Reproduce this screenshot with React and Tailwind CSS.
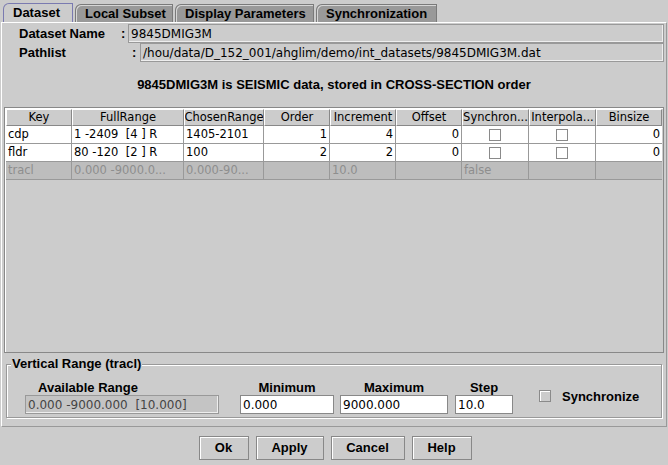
import React from "react";

const tabs = ["Dataset", "Local Subset", "Display Parameters", "Synchronization"];
const tabWidths = ["w-[70px]", "w-[98px]", "w-[139px]", "w-[121px]"];

// bold labels use an Arial-width face, plain values use DejaVu
const B = "font-['Liberation_Sans',sans-serif] font-bold text-[13px] whitespace-nowrap";

const columns = [
  { name: "Key", w: "w-[66px]" },
  { name: "FullRange", w: "w-[112px]" },
  { name: "ChosenRange", w: "w-[80px]" },
  { name: "Order", w: "w-[66px]" },
  { name: "Increment", w: "w-[66px]" },
  { name: "Offset", w: "w-[66px]" },
  { name: "Synchron...", w: "w-[67px]" },
  { name: "Interpola...", w: "w-[67px]" },
  { name: "Binsize", w: "w-[66px]" },
];

const rows = [
  { key: "cdp", full: "1 -2409  [4 ] R", chosen: "1405-2101", order: "1", inc: "4", off: "0", bin: "0" },
  { key: "fldr", full: "80 -120  [2 ] R", chosen: "100", order: "2", inc: "2", off: "0", bin: "0" },
];

function Check() {
  return <span className="block w-[12px] h-[12px] border border-[#8a8a8a] bg-white shadow-[inset_1px_1px_0_#fff]" />;
}

function Cell({ w, align = "left", children, last }) {
  return (
    <div
      className={`${w} h-full flex items-center px-[2px] border-b border-[#999999] whitespace-pre overflow-hidden ${last ? "" : "border-r"} ${
        align === "right" ? "justify-end" : align === "center" ? "justify-center" : "justify-start"
      }`}
    >
      {children}
    </div>
  );
}

function Button({ label, w }) {
  return (
    <div className={`${w} h-[24px] border border-[#888888] shadow-[inset_1px_1px_0_#ffffff] bg-[#cccccc] flex items-center justify-center ${B}`}>
      {label}
    </div>
  );
}

export default function App() {
  return (
    <div className="w-[668px] h-[465px] bg-[#cccccc] text-black overflow-hidden flex flex-col font-['DejaVu_Sans',sans-serif]">
      {/* tab strip */}
      <div className="h-[22px] flex items-end pl-[3px] gap-[2px]">
        {tabs.map((t, i) => (
          <div
            key={t}
            className={`${tabWidths[i]} flex items-center pl-[9px] rounded-tl-[6px] border border-b-0 ${B} ${
              i === 0
                ? "bg-[#cccccc] border-[#7a7ab0] h-[19px]"
                : "bg-[#999999] border-[#7a7a7a] h-[18px] shadow-[inset_1px_1px_0_#d6d6d6]"
            }`}
          >
            {t}
          </div>
        ))}
      </div>

      {/* tab content */}
      <div className="flex-1 mx-[1px] border-t border-white border-l border-l-white border-r border-r-[#999999] border-b border-b-[#999999] flex flex-col px-[2px]">
        <div className="flex items-center h-[19px] mt-[1px]">
          <span className={`w-[104px] pl-[15px] ${B}`}>Dataset Name</span>
          <span className={`w-[20px] pl-[13px] ${B}`}>:</span>
          <div className="flex-1 h-[19px] border border-[#999999] shadow-[inset_-1px_-1px_0_#eeeeee] flex items-center pl-[2px] text-[12px]">
            9845DMIG3M
          </div>
        </div>
        <div className="flex items-center h-[19px]">
          <span className={`w-[128px] pl-[15px] ${B}`}>Pathlist</span>
          <span className={`w-[8px] ${B}`}>:</span>
          <div className="flex-1 h-[19px] border border-[#999999] shadow-[inset_-1px_-1px_0_#eeeeee] flex items-center pl-[2px] text-[12px]">
            /hou/data/D_152_001/ahglim/demo/int_datasets/9845DMIG3M.dat
          </div>
        </div>
        <div className={`h-[45px] flex items-center justify-center ${B}`}>
          9845DMIG3M is SEISMIC data, stored in CROSS-SECTION order
        </div>

        {/* table */}
        <div className="h-[246px] border border-[#888888] shadow-[inset_1px_1px_0_#ffffff] p-[1px] text-[11.5px]">
          <div className="flex h-[17px]">
            {columns.map((c) => (
              <div
                key={c.name}
                className={`${c.w} h-full flex items-center justify-center border-l border-l-white border-t border-t-white border-r border-r-[#888888] border-b border-b-[#888888] overflow-hidden whitespace-nowrap`}
              >
                {c.name}
              </div>
            ))}
          </div>
          {rows.map((r) => (
            <div key={r.key} className="flex h-[18px] bg-white w-[656px]">
              <Cell w={columns[0].w}>{r.key}</Cell>
              <Cell w={columns[1].w}>{r.full}</Cell>
              <Cell w={columns[2].w}>{r.chosen}</Cell>
              <Cell w={columns[3].w} align="right">{r.order}</Cell>
              <Cell w={columns[4].w} align="right">{r.inc}</Cell>
              <Cell w={columns[5].w} align="right">{r.off}</Cell>
              <Cell w={columns[6].w} align="center"><Check /></Cell>
              <Cell w={columns[7].w} align="center"><Check /></Cell>
              <Cell w={columns[8].w} align="right" last>{r.bin}</Cell>
            </div>
          ))}
          <div className="flex h-[18px] bg-[#bdbdbd] text-[#8e8e8e] w-[656px]">
            <Cell w={columns[0].w}>tracl</Cell>
            <Cell w={columns[1].w}>0.000 -9000.0...</Cell>
            <Cell w={columns[2].w}>0.000-90...</Cell>
            <Cell w={columns[3].w} />
            <Cell w={columns[4].w}>10.0</Cell>
            <Cell w={columns[5].w} />
            <Cell w={columns[6].w}>false</Cell>
            <Cell w={columns[7].w} />
            <Cell w={columns[8].w} last />
          </div>
        </div>

        {/* vertical range */}
        <div className="relative mt-[11px] mx-[2px] h-[54px] border border-[#999999] shadow-[inset_1px_1px_0_#ffffff,1px_1px_0_#ffffff]">
          <span className={`absolute -top-[8px] left-[4px] bg-[#cccccc] px-[1px] leading-[14px] ${B}`}>
            Vertical Range (tracl)
          </span>
          <div className="flex items-end h-full pb-[3px] pl-[18px] text-[12px]">
            <div className="flex flex-col items-start w-[196px]">
              <span className={`pl-[13px] leading-[15px] ${B}`}>Available Range</span>
              <div className="w-[194px] h-[19px] border border-[#999999] shadow-[inset_-1px_-1px_0_#eeeeee] bg-[#c4c4c4] pl-[2px] flex items-center text-[#444] whitespace-pre">
                0.000 -9000.000  [10.000]
              </div>
            </div>
            <div className="flex flex-col items-center ml-[19px] w-[94px]">
              <span className={`leading-[15px] ${B}`}>Minimum</span>
              <div className="w-[94px] h-[19px] border border-[#888888] bg-white pl-[2px] flex items-center self-start">0.000</div>
            </div>
            <div className="flex flex-col items-center ml-[6px] w-[108px]">
              <span className={`leading-[15px] ${B}`}>Maximum</span>
              <div className="w-[108px] h-[19px] border border-[#888888] bg-white pl-[2px] flex items-center">9000.000</div>
            </div>
            <div className="flex flex-col items-center ml-[7px] w-[58px]">
              <span className={`leading-[15px] ${B}`}>Step</span>
              <div className="w-[58px] h-[19px] border border-[#888888] bg-white pl-[2px] flex items-center">10.0</div>
            </div>
            <div className="flex items-center ml-[26px] mb-[8px] gap-[11px]">
              <span className="block w-[12px] h-[12px] border border-[#8a8a8a] bg-[#cccccc] shadow-[inset_1px_1px_0_#fff]" />
              <span className={B}>Synchronize</span>
            </div>
          </div>
        </div>
        <div className="flex-1" />
      </div>

      {/* dialog buttons */}
      <div className="h-[38px] flex items-center justify-center gap-[7px] pl-[2px] pt-[3px]">
        <Button label="Ok" w="w-[50px]" />
        <Button label="Apply" w="w-[68px]" />
        <Button label="Cancel" w="w-[74px]" />
        <Button label="Help" w="w-[60px]" />
      </div>
    </div>
  );
}
